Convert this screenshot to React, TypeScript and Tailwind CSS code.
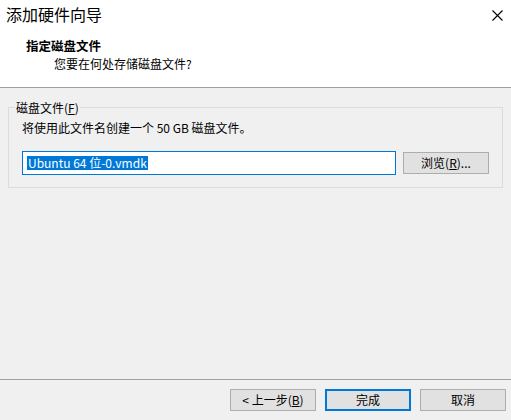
import React from "react";

function Btn({ children, primary }: { children: React.ReactNode; primary?: boolean }) {
  return (
    <button
      className={
        primary
          ? "w-[86px] h-[22px] bg-[#e1e1e1] border-2 border-[#0078d7] text-[12px] leading-none text-black"
          : "w-[86px] h-[22px] bg-[#e1e1e1] border border-[#adadad] text-[12px] leading-none text-black"
      }
    >
      {children}
    </button>
  );
}

export default function App() {
  return (
    <div className="w-[511px] h-[420px] flex flex-col bg-[#f0f0f0] font-['Noto_Sans_CJK_SC','Noto_Sans',sans-serif] text-black overflow-hidden">
      {/* header */}
      <div className="h-[88px] bg-white border-b border-[#a0a0a0] shrink-0">
        <div className="flex justify-between items-start">
          <div className="pl-[6px] pt-[4px] text-[16px] leading-[20px]">添加硬件向导</div>
          <svg className="mt-[10px] mr-[8px]" width="11" height="11" viewBox="0 0 11 11">
            <path d="M0.5 0.5 L10.5 10.5 M10.5 0.5 L0.5 10.5" stroke="#000" strokeWidth="1.1" fill="none" />
          </svg>
        </div>
        <div className="pl-[26px] mt-[14px] text-[12.5px] leading-[16px] font-bold">指定磁盘文件</div>
        <div className="pl-[54px] mt-[2px] text-[12px] leading-[16px]">您要在何处存储磁盘文件?</div>
      </div>

      {/* body */}
      <div className="flex-1 px-[8px] pt-[19px]">
        <div className="relative border border-[#dcdcdc] px-[13px] pt-[12px] pb-[12px]">
          <span className="absolute -top-[8px] left-[6px] px-[1px] bg-[#f0f0f0] text-[12px] leading-[16px]">
            磁盘文件(<span className="underline">F</span>)
          </span>
          <div className="text-[12px] leading-[16px]">将使用此文件名创建一个 50 GB 磁盘文件。</div>
          <div className="flex items-center gap-[7px] mt-[15px]">
            <div className="flex-1 h-[24px] bg-white border border-[#0078d7] flex items-center pl-[4px]">
              <span className="bg-[#0078d7] text-white text-[12px] leading-[14px] px-[1px]">Ubuntu 64 位-0.vmdk</span>
            </div>
            <Btn>
              浏览(<span className="underline">R</span>)...
            </Btn>
          </div>
        </div>
      </div>

      {/* footer */}
      <div className="h-[41px] shrink-0 border-t border-[#a0a0a0] flex justify-end items-start gap-[9px] pt-[9px] pr-[5px]">
        <Btn>
          &lt; 上一步(<span className="underline">B</span>)
        </Btn>
        <Btn primary>完成</Btn>
        <Btn>取消</Btn>
      </div>
    </div>
  );
}
